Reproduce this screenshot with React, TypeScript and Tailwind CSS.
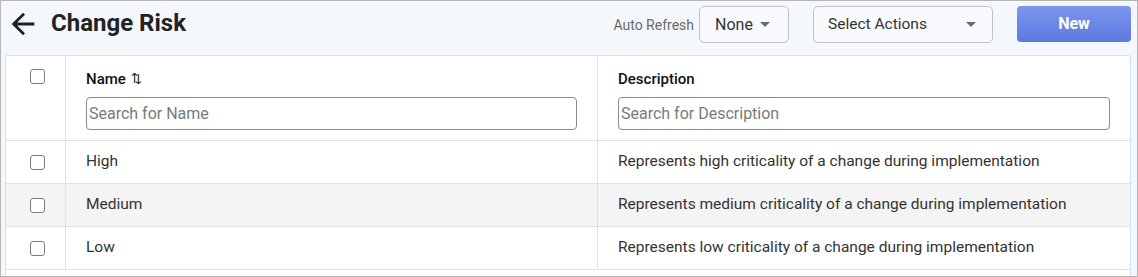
import React from "react";

function Caret() {
  return (
    <svg width="10" height="5" viewBox="0 0 10 5" className="shrink-0">
      <path d="M0 0 L10 0 L5 5 Z" fill="#6b6b6b" />
    </svg>
  );
}

function Box() {
  return <div className="w-[15px] h-[15px] border border-[#7c7c7c] rounded-[3px] bg-white" />;
}

const rows = [
  { name: "High", desc: "Represents high criticality of a change during implementation" },
  { name: "Medium", desc: "Represents medium criticality of a change during implementation", alt: true },
  { name: "Low", desc: "Represents low criticality of a change during implementation" },
];

export default function App() {
  return (
    <div className="w-[1138px] h-[277px] border border-[#b6b6b6] bg-[#f4f7fc] overflow-hidden font-['Roboto',sans-serif] flex flex-col">
      <div className="h-[54px] shrink-0 flex items-start pr-[6px]">
        <svg width="34" height="34" viewBox="0 0 24 24" className="ml-[5px] mt-[6px] shrink-0">
          <path d="M20 11H7.83l5.59-5.59L12 4l-8 8 8 8 1.41-1.41L7.83 13H20v-2z" fill="#1f1f1f" />
        </svg>
        <div className="ml-[11px] mt-[8px] text-[24px] leading-[28px] font-bold text-[#222]">Change Risk</div>
        <div className="flex-1" />
        <div className="mt-[15px] text-[14px] leading-[18px] text-[#6a6a6a]">Auto Refresh</div>
        <div className="ml-[5px] mt-[5px] w-[90px] h-[37px] border border-[#c2c2c2] rounded-[5px] bg-[#f8fafd] flex items-center pl-[15px] pr-[18px] justify-between">
          <span className="text-[16px] text-[#333]">None</span>
          <Caret />
        </div>
        <div className="ml-[24px] mt-[5px] w-[180px] h-[37px] border border-[#c2c2c2] rounded-[5px] bg-[#f8fafd] flex items-center pl-[14px] pr-[16px] justify-between">
          <span className="text-[15.5px] text-[#333]">Select Actions</span>
          <Caret />
        </div>
        <div className="ml-[24px] mt-[5px] w-[114px] h-[36px] rounded-[4px] bg-gradient-to-b from-[#7d97ee] to-[#5b79de] flex items-center justify-center text-white font-bold text-[16px]">
          New
        </div>
      </div>
      <div className="ml-[4px] mr-[6px] flex-1 bg-white border border-b-0 border-[#d0e4f6] rounded-t-[3px]">
        <div className="grid grid-cols-[60px_1fr_1fr] h-[85px] border-b border-[#e0e0e0]">
          <div className="border-r border-[#e0e0e0] pl-[24px] pt-[13px]">
            <Box />
          </div>
          <div className="border-r border-[#e0e0e0] px-[20px] pt-[13px]">
            <div className="flex items-center text-[15px] leading-[20px] font-medium text-[#111]">
              Name
              <span className="ml-[5px] text-[13px] font-normal">⇅</span>
            </div>
            <input
              className="mt-[8px] w-full h-[33px] border border-[#8a8a8a] rounded-[4px] px-[2px] text-[16px] placeholder-[#7a7a7a] outline-none"
              placeholder="Search for Name"
            />
          </div>
          <div className="px-[20px] pt-[13px]">
            <div className="text-[15px] leading-[20px] font-medium text-[#111]">Description</div>
            <input
              className="mt-[8px] w-full h-[33px] border border-[#8a8a8a] rounded-[4px] px-[2px] text-[16px] placeholder-[#7a7a7a] outline-none"
              placeholder="Search for Description"
            />
          </div>
        </div>
        {rows.map((r) => (
          <div
            key={r.name}
            className={`grid grid-cols-[60px_1fr_1fr] h-[43px] border-b border-[#e0e0e0] text-[15.5px] text-[#333] ${r.alt ? "bg-[#f4f4f4]" : ""}`}
          >
            <div className="border-r border-[#e0e0e0] pl-[24px] flex items-center">
              <Box />
            </div>
            <div className="border-r border-[#e0e0e0] px-[20px] flex items-center">{r.name}</div>
            <div className="px-[20px] flex items-center">{r.desc}</div>
          </div>
        ))}
      </div>
    </div>
  );
}
